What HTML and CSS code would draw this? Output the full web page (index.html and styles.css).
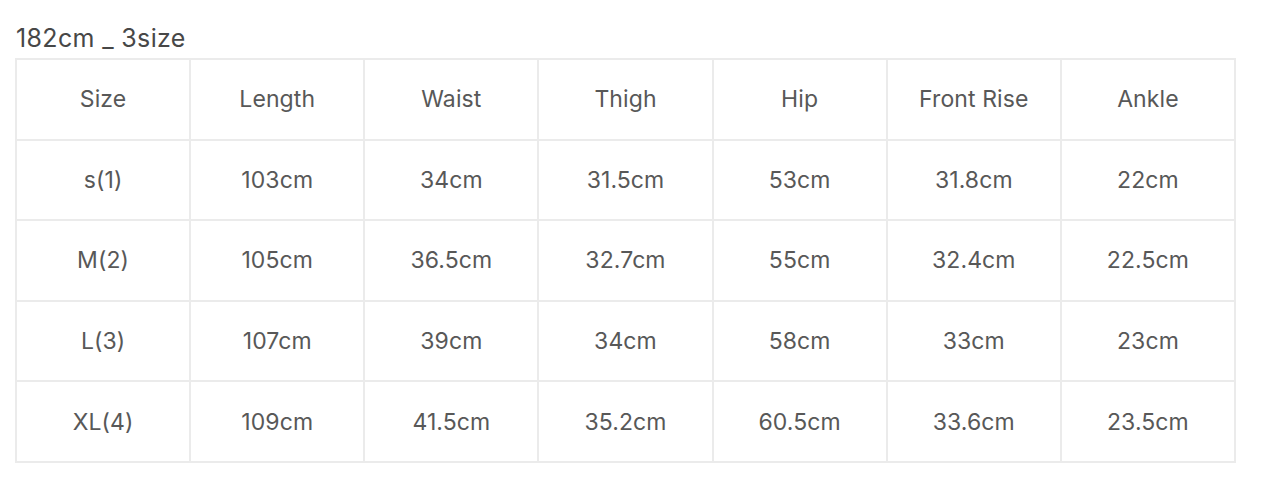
FILE: index.html
```html
<!DOCTYPE html>
<html>
<head>
<meta charset="utf-8">
<link rel="stylesheet" href="styles.css">
</head>
<body>
<div class="wrap">
  <div class="title">182cm _ 3size</div>
  <table class="size-table">
    <tr><td>Size</td><td>Length</td><td>Waist</td><td>Thigh</td><td>Hip</td><td>Front Rise</td><td>Ankle</td></tr>
    <tr><td>s(1)</td><td>103cm</td><td>34cm</td><td>31.5cm</td><td>53cm</td><td>31.8cm</td><td>22cm</td></tr>
    <tr><td>M(2)</td><td>105cm</td><td>36.5cm</td><td>32.7cm</td><td>55cm</td><td>32.4cm</td><td>22.5cm</td></tr>
    <tr><td>L(3)</td><td>107cm</td><td>39cm</td><td>34cm</td><td>58cm</td><td>33cm</td><td>23cm</td></tr>
    <tr><td>XL(4)</td><td>109cm</td><td>41.5cm</td><td>35.2cm</td><td>60.5cm</td><td>33.6cm</td><td>23.5cm</td></tr>
  </table>
</div>
</body>
</html>
```
FILE: styles.css
```css
html, body {
  margin: 0;
  padding: 0;
  background: #ffffff;
}
body {
  font-family: Inter, "Noto Sans", sans-serif;
  color: #444444;
}
.wrap {
  padding: 23px 0 0 15px;
}
.title {
  font-size: 25px;
  line-height: 31px;
  padding-left: 1px;
  margin-bottom: 4px;
  color: #474747;
  letter-spacing: 0.35px;
}
.size-table {
  border-collapse: collapse;
  width: 1221px;
  table-layout: fixed;
}
.size-table td {
  border: 2px solid #ebebeb;
  height: 78.6px;
  padding: 0;
  text-align: center;
  vertical-align: middle;
  font-size: 23px;
  letter-spacing: 0.1px;
  color: #585858;
}
```
